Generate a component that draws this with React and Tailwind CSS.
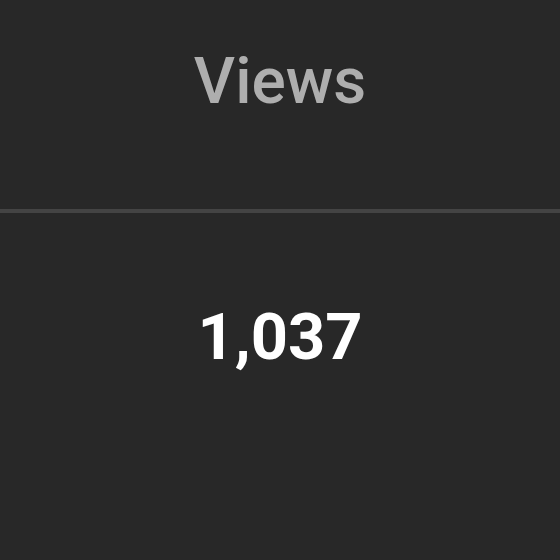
import React from 'react';

export default function App() {
  return (
    <div
      className="w-[560px] h-[560px] bg-[#282828] flex flex-col"
      style={{ fontFamily: 'Roboto, "Liberation Sans", sans-serif' }}
    >
      <div className="h-[209px] pt-[50px] flex justify-center">
        <span className="text-[64px] leading-none font-medium text-[#aeaeae]">Views</span>
      </div>
      <div className="h-[4px] bg-[#444444]" />
      <div className="pt-[92px] flex justify-center">
        <span className="text-[65px] leading-none font-bold text-white">1,037</span>
      </div>
    </div>
  );
}
